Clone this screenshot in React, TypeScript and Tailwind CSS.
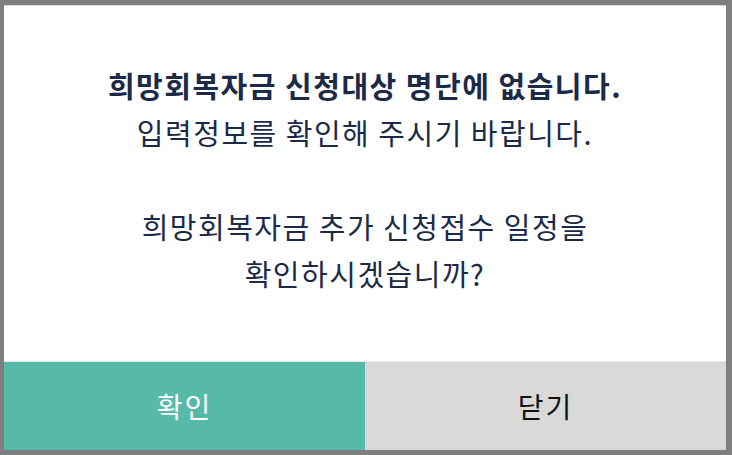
// 신청대상 확인 결과 안내 팝업
const FONT = "font-['Noto_Sans_CJK_KR','Noto_Sans',sans-serif]";

export default function App() {
  const onConfirm = () => {};
  const onClose = () => {};

  return (
    <div className={`w-[732px] h-[455px] bg-[#7f7f7f] pt-[5px] px-[4px] ${FONT}`}>
      <div className="w-[722px] h-[445px] bg-white flex flex-col border-t border-[#d9d9d9]">
        <div className="flex-1 flex flex-col items-center justify-center text-center text-[#1b2a47] text-[29px] leading-[47px] tracking-[1.5px] pb-[8px]">
          <p className="font-bold">희망회복자금 신청대상 명단에 없습니다.</p>
          <p>입력정보를 확인해 주시기 바랍니다.</p>
          <p className="h-[47px]" />
          <p>희망회복자금 추가 신청접수 일정을</p>
          <p>확인하시겠습니까?</p>
        </div>
        <div className="flex h-[89px] border-t border-[#e8e8e8] text-[28px] tracking-[2px]">
          <button type="button" onClick={onConfirm} className="flex-1 bg-[#57b9a8] text-white">
            확인
          </button>
          <button type="button" onClick={onClose} className="flex-1 bg-[#d9d9d9] text-[#111]">
            닫기
          </button>
        </div>
      </div>
    </div>
  );
}
